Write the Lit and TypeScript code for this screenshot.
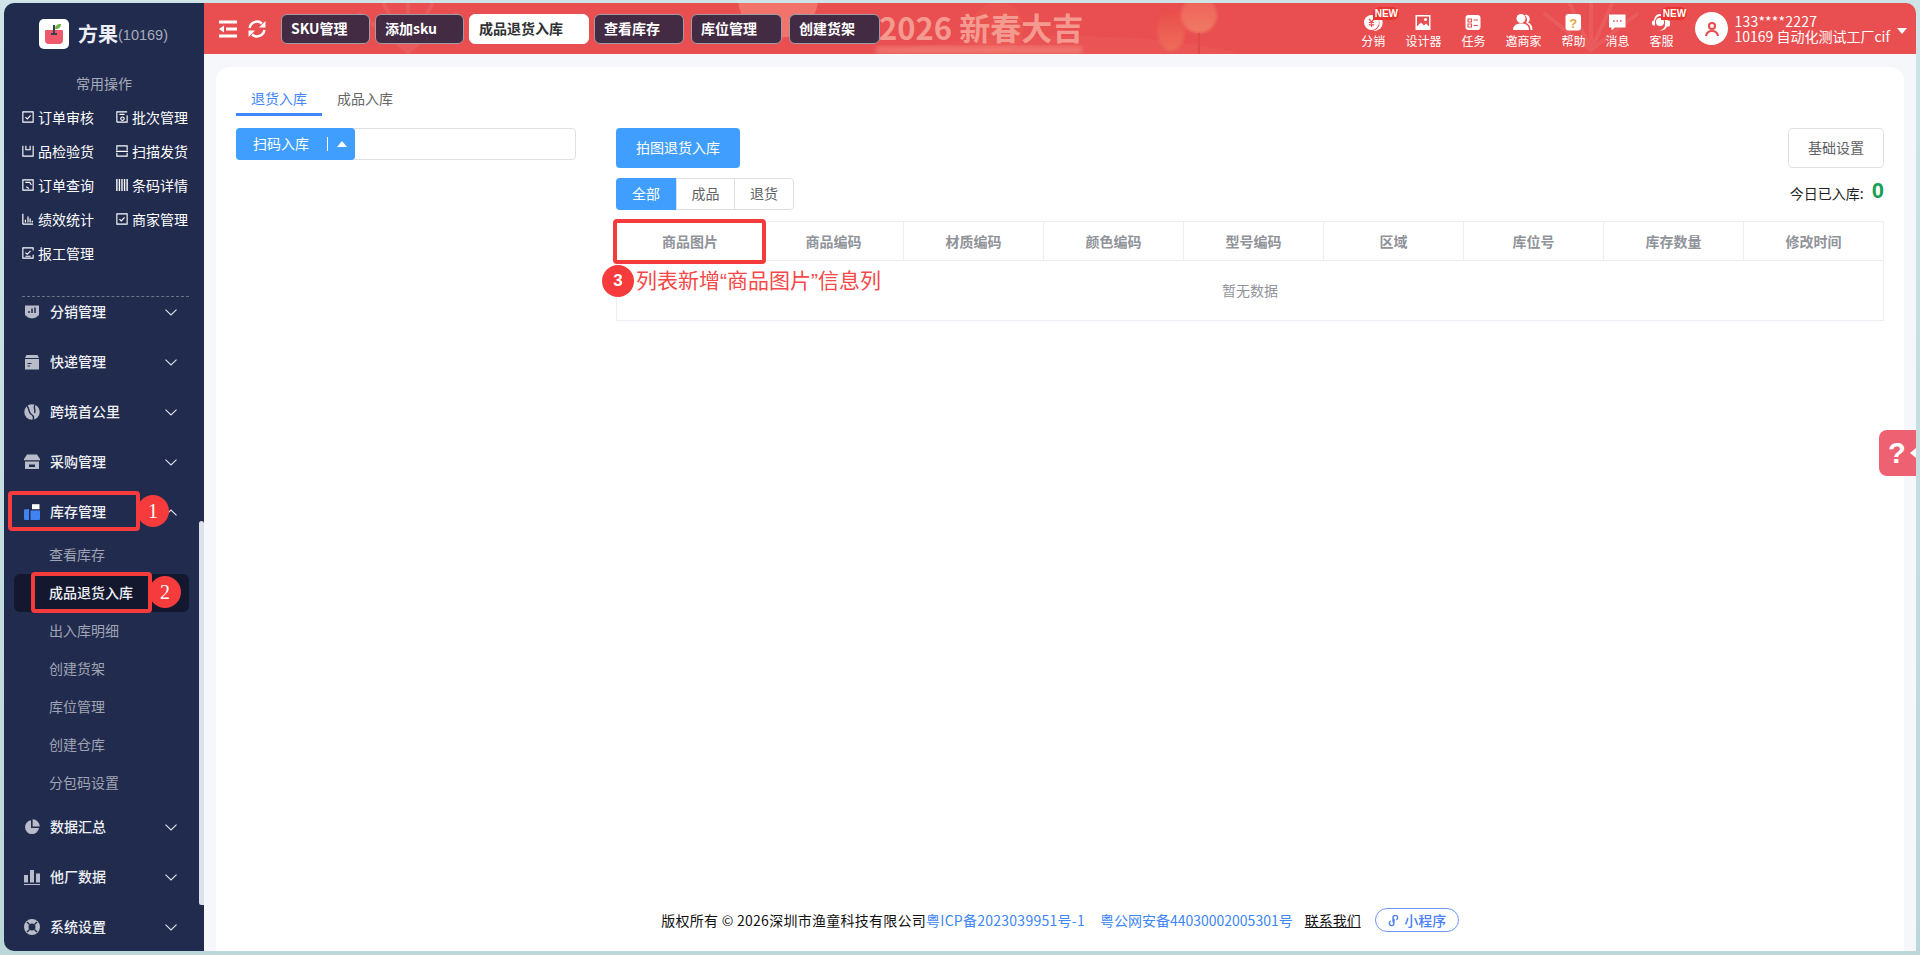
import { LitElement, html, css, svg } from "lit";
import { customElement } from "lit/decorators.js";

const stroke = (d: string, sw = 1.3) => html`<svg viewBox="0 0 14 14" width="12" height="12" fill="none" stroke="currentColor" stroke-width="${sw}">${svg`<path d="${d}"/>`}</svg>`;

const quick: [string, any][] = [
  ["订单审核", stroke("M1 1h12v12h-12zM4 7.2l2.2 2 3.8-4.2")],
  ["批次管理", stroke("M1 13v-12h12M13 5v8h-12M4 4h6M7.500 7a2 2 0 1 0 .01 0z")],
  ["品检验货", stroke("M1 1v12h12v-12M4.500 1v4.500h5v-4.500")],
  ["扫描发货", stroke("M1 6v-5h12V6M1 9v4h12V9M0 7.500h14")],
  ["订单查询", stroke("M1 1h12v12h-12zM4 4h5l2 3M5 9l3 2")],
  ["条码详情", stroke("M1 0v14M4 0v14M7 0v14M10 0v14M13 0v14", 1.6)],
  ["绩效统计", stroke("M1 13v-12M1 13h12M4 11V8M7 11V4M9.500 11V6.500M12 11V9", 1.400)],
  ["商家管理", stroke("M1 1h12v12h-12zM4 7.200l2.200 2 3.800-4.200")],
  ["报工管理", stroke("M13 4V1h-12v12h12V9M4 6.500l2 2 4-4M4 10.800h6")],
];

const f = (c: any) => html`<svg viewBox="0 0 16 16" width="16" height="16" fill="#b9bcc8">${c}</svg>`;
const menuIcons: Record<string, any> = {
  dist: f(svg`<path d="M1 1.500h14v9.500l-3 2.500-4 1-4-1-3-2.500z"/><path d="M5 9V7M8 9V4.500M11 9V3.500" stroke="#212b4e" stroke-width="1.500"/>`),
  exp: f(svg`<path d="M2.500 1h11l1.500 3H1zM1 5h14v10.500H1z"/><path d="M3.500 9.500h4M3.500 12h2.500" stroke="#212b4e" stroke-width="1.200"/>`),
  globe: f(svg`<circle cx="8" cy="8" r="7.700"/><path d="M3 2c3 3 1 6 4 8s3 4 2 6M11 .5C9 4 12 6 10.500 9" stroke="#212b4e" stroke-width="1.400" fill="none"/>`),
  shop: f(svg`<path d="M3 .5h10l3 4.500v1.200H0V5zM1 7.500h14V15H1z"/><path d="M5 10.500h6v2.500H5z" fill="#212b4e"/>`),
  stock: html`<svg viewBox="0 0 16 16" width="16" height="16"><path d="M0 5.500l5-.5v11H1a1 1 0 0 1-1-1z" fill="#3f82f0"/><path d="M6.500 6.500H16V15a1 1 0 0 1-1 1H6.500z" fill="#3f82f0"/><path d="M8 .2h7.500v5H8z" fill="#fff"/></svg>`,
  pie: f(svg`<path d="M7 1.200A7 7 0 1 0 15 9H7z"/><path d="M8.600 .3A7.200 7.200 0 0 1 15.700 7.400H8.600z"/>`),
  bars: f(svg`<path d="M0 6h4v7.500H0zM6 1h4v12.500H6zM12 4.500h4v9h-4zM0 15h16v1H0z"/>`),
  ring: f(svg`<path fill-rule="evenodd" d="M8 0a8 8 0 1 1 0 16A8 8 0 0 1 8 0zm0 4.500a3.500 3.500 0 1 0 0 7 3.500 3.500 0 0 0 0-7z"/><path d="M3 3l2.500 2.500M13 3l-2.500 2.500M3 13l2.500-2.500M13 13l-2.500-2.500" stroke="#212b4e" stroke-width="1.400"/>`),
};
const chevron = (up = false) => html`<svg class="chev ${up ? "up" : ""}" viewBox="0 0 12 7" width="12" height="7" fill="none" stroke="#e4e5ea" stroke-width="1.100"><path d="M.5 .7L6 6l5.500-5.300"/></svg>`;

const topIcon = (c: any) => html`<svg viewBox="0 0 20 20" width="20" height="20" fill="#fff">${c}</svg>`;
const topItems: [string, any, boolean][] = [
  ["分销", topIcon(svg`<path d="M15 3.500a8 8 0 0 1 0 14.500 8 8 0 0 1-5 .8c4-.8 6.500-3.800 6.500-7.800S14 4 15 3.500z"/><circle cx="8.500" cy="10.500" r="7.500"/><path d="M6 7l2.500 3L11 7M5.800 10.500h5.400M5.800 12.800h5.400M8.500 10v5" stroke="#e94e50" stroke-width="1.200" fill="none"/>`), true],
  ["设计器", topIcon(svg`<path fill-rule="evenodd" d="M2.500 3h15v15h-15zM4 4.500v10l4-4 3 3 2-2 3 3V4.500z"/><circle cx="12.500" cy="7.500" r="1.500"/>`), false],
  ["任务", topIcon(svg`<rect x="2.500" y="3" width="15" height="15" rx="3"/><path d="M5 7h3.500v3H5zM5 12h3.500v3H5zM10.500 8h4.500M10.500 13.500h4.500" stroke="#e94e50" stroke-width="1.100" fill="none"/>`), false],
  ["邀商家", topIcon(svg`<circle cx="8" cy="6.500" r="4.500"/><path d="M0 18c0-4.500 3.500-6.500 8-6.500s8 2 8 6.500z"/><path d="M12.500 2.500a4.500 4.500 0 0 1 2.500 8c3 1.200 4.500 3.500 4.500 7.500h-2c0-3.500-1.500-6-4.500-7.200 1.500-1.500 1.500-5.500-1-7.300z"/>`), false],
  ["帮助", html`<svg viewBox="0 0 20 20" width="20" height="20"><rect x="2.500" y="2" width="15.500" height="16.500" rx="3" fill="#fff"/><text x="10.200" y="15.500" text-anchor="middle" font-size="13" font-weight="700" font-family="Liberation Sans" fill="#e8a33a">?</text></svg>`, false],
  ["消息", topIcon(svg`<path d="M2 2.500h16.500v13H8l-3.500 3v-3H2z"/><path d="M6 9h1.600M9.500 9h1.600M13 9h1.600" stroke="#e94e50" stroke-width="1.600"/>`), false],
  ["客服", topIcon(svg`<path d="M9 2c4 0 7 2.500 7.500 6.500h1c1 0 1.500.7 1.500 1.500v3c0 .8-.5 1.500-1.500 1.500H16C15 17 12 19 8 18.500c3-.5 5.500-2 6-5V9c-.5-3-3-5-5-5S4.500 6 4 9v4.500H3c-1 0-2-.7-2-1.500v-2c0-1 1-1.500 2-1.500C3.500 4.500 5.500 2 9 2z"/><circle cx="9" cy="10" r="4"/>`), true],
];

@customElement("app-root")
export class AppRoot extends LitElement {
  static styles = css`
    :host { display: block; width: 1920px; height: 955px; overflow: hidden; background: linear-gradient(#cfe4e6, #bcd7da); font-family: "Noto Sans CJK SC", "Liberation Sans", sans-serif; font-size: 14px; color: #303133; position: relative; }
    * { box-sizing: border-box; }
    svg { display: block; flex: none; }
    .shell { display: flex; height: 955px; padding: 3px 4px 4px; }
    .side { width: 200px; flex: none; background: #212b4e; border-radius: 10px 0 0 10px; position: relative; color: #fff; }
    .logo-row { display: flex; align-items: center; padding: 16px 0 0 35px; height: 46px; }
    .logo { width: 30px; height: 30px; margin-right: 9px; }
    .brand { font-size: 20px; font-weight: 700; color: #eceef3; line-height: 30px; }
    .brand-id { font: 14.500px/30px "Liberation Sans", sans-serif; color: #a7abb9; padding-top: 1px; }
    .ops-title { margin-top: 24px; text-align: center; line-height: 20px; color: #a7abb9; }
    .ops { display: grid; grid-template-columns: 94px 80px; grid-auto-rows: 34px; margin-top: 7px; padding-left: 18px; }
    .op { display: flex; align-items: center; gap: 4px; color: #fff; white-space: nowrap; }
    .op span { padding-bottom: 1px; }
    .dash { margin: 26px 15px 0 18px; border-top: 1px dashed #6c7388; height: 0; }
    .menu { display: flex; flex-direction: column; margin-top: -1px; }
    .mi { display: flex; align-items: center; height: 32px; margin-bottom: 18px; padding-left: 20px; color: #eef0f4; font-weight: 500; position: relative; }
    .mi .txt { margin-left: 10px; flex: 1; padding-bottom: 2px; }
    .chev { margin-right: 27px; }
    .chev.up { transform: rotate(180deg); }
    .sub { margin: -10px 0 9px; display: flex; flex-direction: column; }
    .si { height: 38px; line-height: 36px; padding-left: 35px; margin: 0 15px 0 10px; color: #a0a4b2; border-radius: 6px; }
    .si.on { background: #13182f; color: #eef0f4; font-weight: 500; }
    .scroll { position: absolute; right: 0; top: 518px; width: 5px; height: 384px; background: #dee1e9; border-radius: 3px 3px 0 3px; }
    .main { flex: 1; min-width: 0; display: flex; flex-direction: column; border-radius: 0 10px 0 0; overflow: hidden; }
    .head { height: 51px; flex: none; background: #e94e50; position: relative; display: flex; align-items: center; padding: 0 0 0 15px; }
    .deco { position: absolute; left: 0; top: 0; }
    .head > *:not(.deco) { position: relative; }
    .tools { display: flex; gap: 11px; align-items: center; margin-right: 15px; }
    .tabs { display: flex; gap: 5px; }
    .tab { height: 30px; width: 89px; line-height: 27px; border: 1px solid #a09ca3; border-radius: 6px; background: #432b44; color: #fff; font-weight: 700; padding-left: 9px; white-space: nowrap; }
    .tab.on { background: #fff; color: #303133; width: 120px; border-color: #fff; }
    .tab.mid { width: 90px; }
    .tab.wide { width: 91px; margin-left: 2px; }
    .top-right { margin-left: auto; display: flex; align-items: center; height: 51px; }
    .items { display: flex; gap: 20px; margin-right: 22px; }
    .ti { display: flex; flex-direction: column; align-items: center; position: relative; color: #fff; font-size: 12px; line-height: 16px; padding-top: 3px; }
    .ti svg { margin-bottom: 1px; }
    .new { position: absolute; left: 12px; top: -2px; width: 26px; height: 13px; border-radius: 7px 7px 7px 0; background: #e8352e; color: #fff; font: 700 10px/13px "Liberation Sans Narrow", "Liberation Sans", sans-serif; text-align: center; }
    .avatar { width: 33px; height: 33px; border-radius: 50%; background: #fff; display: flex; align-items: center; justify-content: center; margin-right: 6px; }
    .user { color: #fff; line-height: 15px; font-size: 14px; white-space: nowrap; }
    .user span { letter-spacing: .2px; }
    .caret { width: 0; height: 0; border: 5px solid transparent; border-top: 6px solid #fff; border-bottom: 0; margin: 5px 9px 0 7px; }
    .body { flex: 1; min-height: 0; background: #f6f7fb; padding: 13px 12px 0; }
    .card { height: 100%; background: #fff; border-radius: 14px 14px 0 0; padding: 20px 20px 19px 20px; display: flex; flex-direction: column; }
    .ptabs { display: flex; height: 29px; }
    .pt { width: 86px; text-align: center; color: #4086ff; line-height: 22px; border-bottom: 3px solid #4086ff; }
    .pt.off { color: #666; border-color: transparent; margin-left: 15px; width: 56px; }
    .cols { display: flex; gap: 40px; margin-top: 12px; }
    .scan { width: 340px; height: 32px; display: flex; border: 1px solid #dcdfe6; border-radius: 4px; flex: none; }
    .scan-btn { width: 119px; margin: -1px; height: 32px; background: #409eff; color: #fff; border-radius: 4px; display: flex; align-items: center; padding-left: 17px; }
    .scan-btn span { padding-bottom: 2px; }
    .scan-btn i { width: 1px; height: 14px; background: #fff; margin: 0 9px 0 18px; }
    .scan-btn b { width: 0; height: 0; border: 5px solid transparent; border-bottom: 6px solid #fff; border-top: 0; }
    .right { flex: 1; min-width: 0; }
    .bar { display: flex; justify-content: space-between; align-items: center; }
    .btn { height: 40px; width: 124px; text-align: center; line-height: 38px; background: #409eff; color: #fff; border-radius: 4px; }
    .btn.plain { width: 96px; background: #fff; color: #606266; border: 1px solid #dcdfe6; line-height: 36px; }
    .bar2 { margin-top: 10px; height: 32px; }
    .seg { display: flex; height: 32px; border: 1px solid #dcdfe6; border-radius: 4px; color: #606266; line-height: 28px; text-align: center; }
    .seg span { width: 58px; border-left: 1px solid #dcdfe6; }
    .seg span:first-child { width: 60px; margin: -1px 0 -1px -1px; background: #409eff; color: #fff; border: 0; border-radius: 4px 0 0 4px; line-height: 30px; }
    .seg span:last-child { width: 59px; }
    .today { display: flex; align-items: center; color: #222; padding-bottom: 2px; }
    .today b { font: 700 22px/24px "Liberation Sans", sans-serif; color: #18a058; margin-left: 8px; margin-top: -4px; }
    .tbl { margin-top: 11px; border: 1px solid #ebeef5; height: 100px; }
    .th { display: grid; grid-template-columns: 146px repeat(8, 1fr); height: 39px; border-bottom: 1px solid #ebeef5; }
    .th span { text-align: center; line-height: 38px; color: #909399; font-weight: 700; border-left: 1px solid #ebeef5; }
    .th span:first-child { border: 0; }
    .empty { text-align: center; color: #909399; line-height: 58px; }
    .foot { margin-top: auto; height: 24px; display: flex; align-items: center; justify-content: center; color: #111; white-space: nowrap; }
    .foot a { color: #3d86f5; text-decoration: none; }
    .foot .sp { letter-spacing: .26px; }
    .foot .gap { margin-left: 15px; }
    .foot .ct { color: #111; text-decoration: underline; margin-left: 12px; }
    .pill { display: flex; align-items: center; gap: 4px; justify-content: center; width: 84px; height: 24px; border: 1px solid #6d97fb; border-radius: 12px; color: #4a7ff5; margin-left: 14px; font-weight: 500; }
    .help { position: absolute; left: 1879px; top: 430px; width: 37px; height: 46px; background: #ee6172; border-radius: 8px 0 0 8px; color: #fff; font: 700 29px/46px "Liberation Sans", sans-serif; padding-left: 9px; }
    .help::after { content: ""; position: absolute; right: 0; top: 18px; border: 5px solid transparent; border-right: 6px solid #fff; border-left: 0; }
    .mark { position: absolute; border: 4px solid #f53b3b; border-radius: 4px; pointer-events: none; }
    .dot { position: absolute; width: 32px; height: 32px; border-radius: 50%; background: #f53b3b; color: #fff; text-align: center; font: 20px/32px "Liberation Serif", serif; }
    .dot.s { font: 700 17px/32px "Liberation Sans", sans-serif; }
    .note { position: absolute; left: 636px; top: 265px; font: 21px/32px "Liberation Sans", "Noto Sans CJK SC", sans-serif; color: #f64848; white-space: nowrap; }
    .m1 { left: 8px; top: 491px; width: 132px; height: 40px; }
    .m2 { left: 31px; top: 572px; width: 121px; height: 41px; }
    .m3 { left: 613px; top: 219px; width: 153px; height: 45px; }
    .d1 { left: 137px; top: 495px; }
    .d2 { left: 149px; top: 576px; }
    .d3 { left: 602px; top: 265px; }
  `;

  render() {
    return html`
      <div class="shell">
        <aside class="side">
          <div class="logo-row">
            <svg class="logo" viewBox="0 0 30 30"><rect width="30" height="30" rx="5" fill="#fff"/><path d="M7 11h16a1 1 0 0 1 1 1v9a4 4 0 0 1-4 4H10a4 4 0 0 1-4-4v-9a1 1 0 0 1 1-1z" fill="#ee5a6b"/><path d="M15 6v9" stroke="#3a4150" stroke-width="2"/><path d="M12 15h6" stroke="#3a4150" stroke-width="2"/><path d="M16 10c0-3 2-5 6-5 0 3-2 5-6 5z" fill="#6cb33f"/></svg>
            <span class="brand">方果</span><span class="brand-id">(10169)</span>
          </div>
          <div class="ops-title">常用操作</div>
          <div class="ops">${quick.map(([t, i]) => html`<div class="op">${i}<span>${t}</span></div>`)}</div>
          <div class="dash"></div>
          <nav class="menu">
            <div class="mi">${menuIcons.dist}<span class="txt">分销管理</span>${chevron()}</div>
            <div class="mi">${menuIcons.exp}<span class="txt">快递管理</span>${chevron()}</div>
            <div class="mi">${menuIcons.globe}<span class="txt">跨境首公里</span>${chevron()}</div>
            <div class="mi">${menuIcons.shop}<span class="txt">采购管理</span>${chevron()}</div>
            <div class="mi">${menuIcons.stock}<span class="txt">库存管理</span>${chevron(true)}</div>
            <div class="sub">
              <div class="si">查看库存</div>
              <div class="si on">成品退货入库</div>
              <div class="si">出入库明细</div>
              <div class="si">创建货架</div>
              <div class="si">库位管理</div>
              <div class="si">创建仓库</div>
              <div class="si">分包码设置</div>
            </div>
            <div class="mi">${menuIcons.pie}<span class="txt">数据汇总</span>${chevron()}</div>
            <div class="mi">${menuIcons.bars}<span class="txt">他厂数据</span>${chevron()}</div>
            <div class="mi">${menuIcons.ring}<span class="txt">系统设置</span>${chevron()}</div>
          </nav>
          <div class="scroll"></div>
        </aside>
        <div class="main">
          <header class="head">
            <svg class="deco" width="1712" height="51" viewBox="204 3 1712 51">
              <defs>
                <filter id="bl"><feGaussianBlur stdDeviation="2"/></filter>
                <filter id="bl1"><feGaussianBlur stdDeviation="1.500"/></filter>
                <linearGradient id="lan" x1="0" y1="0" x2="0" y2="1"><stop offset="0" stop-color="#e94c4b"/><stop offset="1" stop-color="#ee6c5a"/></linearGradient>
                <linearGradient id="lan2" x1="0" y1="0" x2="0" y2="1"><stop offset="0" stop-color="#ee6056"/><stop offset="1" stop-color="#f07a66"/></linearGradient>
              </defs>
              <g stroke="#fff" stroke-opacity=".08" stroke-width="4" stroke-linecap="round">
                <path d="M408 52V3M408 52L360 14M408 52L456 14M408 52L384 4M408 52L432 4"/>
                <path d="M1591 50V3M1591 50L1545 14M1591 50L1637 14M1591 50L1570 4M1591 50L1612 4"/>
              </g>
              <circle cx="778" cy="-2" r="40" fill="#f2736b"/>
              <circle cx="998" cy="28" r="26" fill="#ec5a52" fill-opacity=".6"/>
              <path d="M880 54c100-24 280-24 360 0z" fill="#ef625f" fill-opacity=".35"/>
              <ellipse cx="1171" cy="30" rx="14" ry="21" fill="url(#lan)" filter="url(#bl1)"/>
              <ellipse cx="1199" cy="15" rx="18" ry="18" fill="url(#lan2)" filter="url(#bl1)"/>
              <path d="M1199 33v21" stroke="#dd4a46" stroke-width="2"/>
              <rect x="876" y="46" width="206" height="8" fill="#f79a8e" fill-opacity=".45" filter="url(#bl)"/>
              <text x="879" y="40" font-family="Noto Sans CJK SC" font-weight="700" font-size="31" fill="#f59a90">2026 新春大吉</text>
            </svg>
            <div class="tools">
              <svg viewBox="0 0 18 18" width="18" height="18" fill="none" stroke="#fff" stroke-width="3"><path d="M0 2h18M7 9h11M0 16h18"/><path d="M5 5.500v7L0 9z" fill="#fff" stroke="none"/></svg>
              <svg viewBox="0 0 18 18" width="18" height="18" fill="none" stroke="#fff" stroke-width="2.400"><path d="M1.600 8A7.500 7.500 0 0 1 14 3.500M16.400 10A7.500 7.500 0 0 1 4 14.500"/><path d="M17.500 1v6.500H11zM.5 17v-6.500H7z" fill="#fff" stroke="none"/></svg>
            </div>
            <div class="tabs">
              <div class="tab">SKU管理</div>
              <div class="tab">添加sku</div>
              <div class="tab on">成品退货入库</div>
              <div class="tab mid">查看库存</div>
              <div class="tab wide">库位管理</div>
              <div class="tab wide">创建货架</div>
            </div>
            <div class="top-right">
              <div class="items">
              ${topItems.map(([t, i, n]) => html`<div class="ti">${i}<span>${t}</span>${n ? html`<span class="new">NEW</span>` : ""}</div>`)}
              </div>
              <div class="avatar"><svg viewBox="0 0 16 16" width="16" height="16" fill="none" stroke="#e94e50" stroke-width="2.200"><circle cx="8" cy="5" r="3"/><path d="M2 15c.5-3 3-5 6-5s5.500 2 6 5"/></svg></div>
              <div class="user"><span>133****2227</span><br />10169 自动化测试工厂cif</div>
              <div class="caret"></div>
            </div>
          </header>
          <div class="body">
            <section class="card">
              <div class="ptabs"><div class="pt">退货入库</div><div class="pt off">成品入库</div></div>
              <div class="cols">
                <div class="scan"><div class="scan-btn"><span>扫码入库</span><i></i><b></b></div></div>
                <div class="right">
                  <div class="bar"><div class="btn">拍图退货入库</div><div class="btn plain">基础设置</div></div>
                  <div class="bar bar2">
                    <div class="seg"><span>全部</span><span>成品</span><span>退货</span></div>
                    <div class="today">今日已入库:<b>0</b></div>
                  </div>
                  <div class="tbl">
                    <div class="th">${["商品图片", "商品编码", "材质编码", "颜色编码", "型号编码", "区域", "库位号", "库存数量", "修改时间"].map((t) => html`<span>${t}</span>`)}</div>
                    <div class="empty">暂无数据</div>
                  </div>
                </div>
              </div>
              <footer class="foot">
                <span class="sp">版权所有 © 2026深圳市渔童科技有限公司</span><a class="sp">粤ICP备2023039951号-1</a><a class="gap">粤公网安备44030002005301号</a><a class="ct">联系我们</a>
                <div class="pill"><svg viewBox="0 0 14 14" width="13" height="13" fill="none" stroke="currentColor" stroke-width="1.500"><path d="M9 1.500a2.500 2.500 0 0 1 1 4.800M5 12.500a2.500 2.500 0 0 1-1-4.800M6.500 9V4a2.500 2.500 0 0 1 2.500-2.500M7.500 5v5A2.500 2.500 0 0 1 5 12.500"/></svg>小程序</div>
              </footer>
            </section>
          </div>
        </div>
      </div>
      <div class="help">?</div>
      <div class="mark m1"></div>
      <div class="dot d1">1</div>
      <div class="mark m2"></div>
      <div class="dot d2">2</div>
      <div class="mark m3"></div>
      <div class="dot s d3">3</div>
      <div class="note">列表新增“商品图片”信息列</div>
    `;
  }
}
